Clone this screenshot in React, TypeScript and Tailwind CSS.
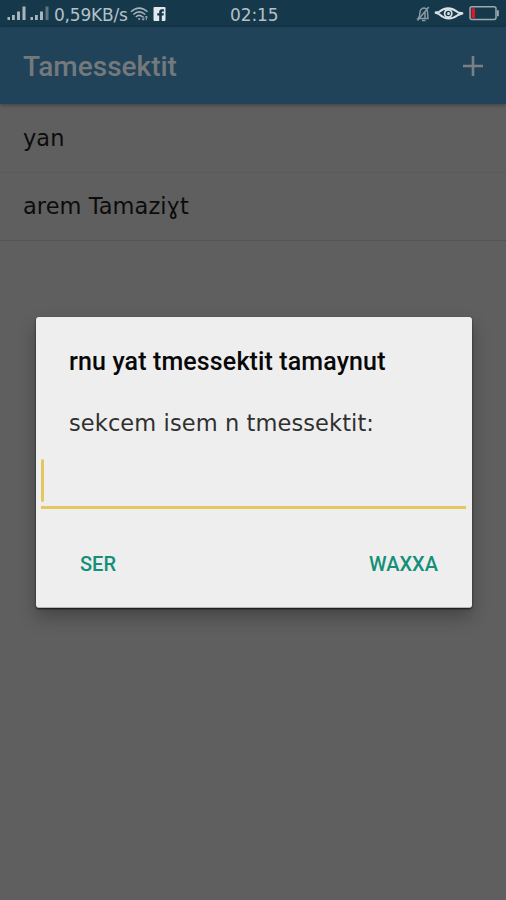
import React from 'react';

const SANS = "font-['DejaVu_Sans',sans-serif]";
const items = ['yan', 'arem Tamaziɣt'];

function Signal({ faded = false }: { faded?: boolean }) {
  return (
    <svg width="20" height="15" viewBox="0 0 20 15" fill="#a9b5bd">
      <rect x="0.5" y="11" width="2.5" height="3" />
      <rect x="5" y="9" width="2.8" height="5" />
      <rect x="10" y="5.5" width="3" height="8.5" />
      <rect x="15.5" y="0.5" width="3" height="13.5" fill={faded ? '#5d7683' : '#a9b5bd'} />
    </svg>
  );
}

function Wifi() {
  return (
    <svg width="19" height="16" viewBox="0 0 19 16" fill="none" stroke="#a4b2ba" strokeWidth="1.5">
      <path d="M1 5.8Q9.2-1.5 17.5 5.8M3.3 8.5Q9.2 3.2 15.2 8.5M5.8 11Q9.2 7.8 12.7 11" />
      <circle cx="9.2" cy="13" r="1" fill="#a4b2ba" stroke="none" />
      <path d="M13.2 10v4M11.9 12.6l1.3 1.6 1.3-1.6M16.3 14.2v-4M15 11.6l1.3-1.6 1.3 1.6" strokeWidth="0.9" />
    </svg>
  );
}

function Facebook() {
  return (
    <svg width="13" height="14" viewBox="0 0 13 14">
      <rect x="0.5" width="12" height="14" rx="1" fill="#e3e8eb" />
      <path d="M6.2 14V8.6H4.3V6.2h1.9V4.8Q6.2 2.2 8.9 2.2h2v2.2H9.7q-.9 0-.9.8v1h2.1l-.3 2.4H8.8V14z" fill="#15384b" />
    </svg>
  );
}

function Muted() {
  return (
    <svg width="15" height="16" viewBox="0 0 15 16" fill="none" stroke="#8798a2" strokeWidth="1.5">
      <path d="M2 12.5Q4 10.5 4 6Q4.5 2.5 8 2Q11.5 2.5 11.5 6L12 12.5ZM6 14.5h3.5M1.5 14.5L12.8 1M9 12V6" />
    </svg>
  );
}

function Eye() {
  return (
    <svg width="30" height="16" viewBox="0 0 30 16" fill="none">
      <path d="M1 6.5L5 8Q14 16.5 24 9L29 7.2L24.2 6.5Q14-1.5 5 6Z" stroke="#dbe2e6" strokeWidth="2" />
      <circle cx="14.2" cy="7.5" r="3.6" fill="#15384b" stroke="#dbe2e6" strokeWidth="1.7" />
      <circle cx="14.5" cy="7.5" r="1.5" fill="#dbe2e6" />
    </svg>
  );
}

function Battery() {
  return (
    <svg width="31" height="15" viewBox="0 0 31 15">
      <rect x="1" y="0.8" width="26" height="12.8" rx="2" fill="none" stroke="#9ba9b1" strokeWidth="1.5" />
      <rect x="2.5" y="2.2" width="3.5" height="10" fill="#da1926" />
      <path d="M28 4.2h1.8v6H28z" fill="#9ba9b1" />
    </svg>
  );
}

function StatusBar() {
  return (
    <header className={`grid h-[27px] shrink-0 grid-cols-[230px_1fr_90px] bg-[#15384b] text-[#b5c0c7] ${SANS}`}>
      <div className="flex pl-[7px] pt-[6px]">
        <Signal />
        <div className="ml-[3px]"><Signal faded /></div>
        <span className="ml-[4px] mt-[1px] w-[74px] whitespace-nowrap text-[17px] leading-[17px] tracking-[-0.2px]">0,59KB/s</span>
        <div className="ml-[2px]"><Wifi /></div>
        <div className="ml-[4px] mt-px"><Facebook /></div>
      </div>
      <span className="pt-[7px] text-[17px] leading-[17px] tracking-[-0.1px]">02:15</span>
      <div className="flex pt-[6px]">
        <Muted />
        <div className="ml-[3px]"><Eye /></div>
        <div className="ml-[5px]"><Battery /></div>
      </div>
    </header>
  );
}

function Dialog() {
  return (
    <div className="absolute inset-0 flex pl-[36px] pt-[317px]">
      <section role="dialog" className="flex h-[291px] w-[436px] flex-col rounded-[3px] border-b border-[#b5b5b5] bg-[#eee] shadow-[0_1px_2px_rgba(0,0,0,0.75),0_9px_18px_rgba(0,0,0,0.28)]">
        <h2 className="whitespace-nowrap pl-[33px] pt-[29px] font-['Roboto',sans-serif] text-[25px] font-medium leading-[32px] tracking-[0.13px] text-[#080808]">
          rnu yat tmessektit tamaynut
        </h2>
        <p className={`whitespace-nowrap pl-[33px] pt-[31px] text-[22.5px] leading-[28px] tracking-[0.1px] text-[#303030] ${SANS}`}>sekcem isem n tmessektit:</p>
        <div className="ml-[5px] mr-[6px] mt-[22px] h-[50px] border-b-[3px] border-[#e3c85e]">
          <div className="h-[43px] w-[3px] rounded-full bg-[#e3c85e]" />
        </div>
        <div className="flex justify-between pl-[44px] pr-[34px] pt-[42px] font-['Roboto',sans-serif] text-[20px] font-medium leading-[26px] text-[#149078]">
          <button>SER</button>
          <button>WAXXA</button>
        </div>
      </section>
    </div>
  );
}

export default function App() {
  return (
    <div className="relative flex h-[900px] w-full flex-col overflow-hidden bg-[#5f5f5f]">
      <StatusBar />
      <div className="z-0 flex h-[77px] shrink-0 items-center justify-between bg-[#214359] pl-[23px] pr-[23px] text-[#74797c] shadow-[0_1px_4px_rgba(0,0,0,0.35)]">
        <h1 className="pt-[2px] font-['Roboto',sans-serif] text-[28px] font-medium leading-[32px]">Tamessektit</h1>
        <svg width="20" height="20" viewBox="0 0 20 20" stroke="#7b8082" strokeWidth="2.6">
          <path d="M10 0v20M0 10h20" />
        </svg>
      </div>
      <ul className={`pt-px text-[22.5px] text-[#0c0c0c] ${SANS}`}>
        {items.map((item) => (
          <li key={item} className="flex h-[68px] items-center border-b border-[#5b5b5b] pl-[23px] tracking-[0.05px] last:border-[#555]">{item}</li>
        ))}
      </ul>
      <Dialog />
    </div>
  );
}
